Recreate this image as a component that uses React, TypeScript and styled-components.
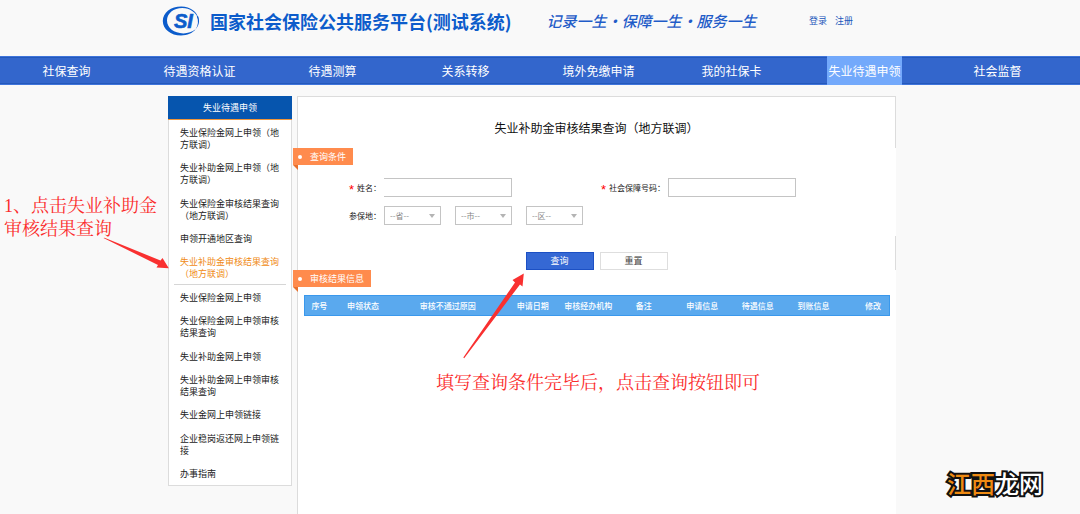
import React from 'react';
import styled, { createGlobalStyle, css } from 'styled-components';

const GlobalStyle = createGlobalStyle`
  *, *::before, *::after { box-sizing: border-box; }
  body {
    margin: 0;
    background: #f9f9f9;
    color: #222;
    font-family: "Noto Sans CJK SC", sans-serif;
    font-size: 9px;
    line-height: 12px;
  }
  button, input, select { font: inherit; margin: 0; }
  a { color: inherit; text-decoration: none; }
`;

const Page = styled.div`
  position: relative;
  display: flex;
  flex-direction: column;
  min-height: 100vh;
`;

const Header = styled.header`
  padding: 0 16px 14px 0;
`;

const HeaderInner = styled.div`
  display: flex;
  align-items: center;
  max-width: 740px;
  height: 42px;
  margin: 0 auto;
`;

const Logo = styled.svg`
  flex: none;
  width: 38px;
  height: 30px;
  margin-right: 10px;
`;

const SiteTitle = styled.h1`
  margin: 0 35px 0 0;
  color: #0c5ccb;
  font-size: 18px;
  font-weight: 700;
  line-height: 24px;
  white-space: nowrap;
`;

const Slogan = styled.p`
  margin: 0;
  color: #1f5cc8;
  font-family: KaiTi, STKaiti, "Noto Sans CJK SC", serif;
  font-size: 15px;
  font-style: italic;
  font-weight: 500;
  line-height: 20px;
  white-space: nowrap;
`;

const Account = styled.div`
  display: flex;
  gap: 8px;
  margin-left: auto;
  padding-right: 49px;
  color: #2257bb;
`;

const Nav = styled.nav`
  display: grid;
  grid-template-columns: repeat(8, 1fr);
  height: 29px;
  padding-right: 16px;
  background: linear-gradient(#3f74db 1px, #2459bb 1px 2px, #3366cc 2px 27px, #2459bb 27px 28px, #3f74db 28px);
`;

const NavLink = styled.a<{ $active?: boolean }>`
  justify-self: center;
  padding: 0 1px;
  color: #fff;
  font-size: 12px;
  line-height: 29px;
  white-space: nowrap;
  ${(p) => p.$active && css`background: #73a9fb;`}
`;

const Content = styled.div`
  flex: 1;
  display: grid;
  padding: 11px 16px 0 0;
`;

const Columns = styled.div`
  display: grid;
  grid-template-columns: 124px minmax(0, 1fr);
  gap: 5px;
  width: 100%;
  max-width: 728px;
  margin: 0 auto;
`;

const Sidebar = styled.aside`
  align-self: start;
  display: flex;
  flex-direction: column;
  min-height: 390px;
  border: 1px solid #dcdcdc;
  border-top: 0;
  background: #fff;
`;

const SidebarHead = styled.h2`
  margin: 0 -1px;
  border-bottom: 1px solid #f0953a;
  background: #0655ae;
  color: #fff;
  font-size: 9px;
  font-weight: 400;
  line-height: 23px;
  text-align: center;
`;

const Menu = styled.ul`
  flex: 1;
  display: flex;
  flex-direction: column;
  justify-content: space-between;
  margin: 0;
  padding: 7px 5px 0;
  list-style: none;
`;

const MenuItem = styled.li<{ $active?: boolean }>`
  padding: 0 5px 4px 6px;
  border-bottom: 1px solid ${(p) => (p.$active ? '#d6d6d6' : 'transparent')};
  color: ${(p) => (p.$active ? '#f08a14' : '#222')};
`;

const Panel = styled.main`
  border-top: 1px solid #dcdcdc;
  border-left: 1px solid #dcdcdc;
  background: #fff;
`;

const TitleBar = styled.div`
  padding: 19px 0 8px;
  border-right: 1px solid #dcdcdc;
`;

const PanelTitle = styled.h2`
  margin: 0;
  color: #111;
  font-size: 12px;
  font-weight: 400;
  line-height: 24px;
  text-align: center;
`;

const Tag = styled.h3`
  position: relative;
  width: fit-content;
  height: 17px;
  margin: 0 0 0 -5px;
  padding: 0 7px 0 17px;
  background: #ff8b4d;
  color: #fff;
  font-size: 9px;
  font-weight: 400;
  line-height: 17px;

  &::before {
    content: "";
    position: absolute;
    top: 7px;
    left: 5px;
    width: 4px;
    height: 4px;
    border-radius: 50%;
    background: #fff;
  }

  &::after {
    content: "";
    position: absolute;
    top: 100%;
    left: 0;
    border-top: 5px solid #e8702c;
    border-left: 5px solid transparent;
  }
`;

const Fields = styled.div`
  display: grid;
  grid-template-columns: 86px 128px 156px 128px;
  row-gap: 9px;
  align-items: center;
  padding: 13px 0 11px;
  font-size: 8px;
`;

const Label = styled.label<{ $required?: boolean }>`
  padding-right: 3px;
  text-align: right;
  ${(p) =>
    p.$required &&
    css`
      &::before {
        content: "*";
        margin-right: 3px;
        color: #f00;
        font-family: "Liberation Sans", sans-serif;
        font-size: 13px;
        line-height: 8px;
        vertical-align: -3px;
      }
    `}
`;

const TextInput = styled.input<{ $open?: boolean }>`
  width: 100%;
  height: 19px;
  padding: 0 4px;
  border: 1px solid #c4c4c4;
  ${(p) => p.$open && css`border-left: 0;`}
  border-radius: 0;
  background: #fff;
`;

const Regions = styled.div`
  grid-column: 2 / -1;
  display: flex;
  gap: 14px;
`;

const SelectBox = styled.div`
  position: relative;
  width: 57px;

  &::after {
    content: "";
    position: absolute;
    top: 8px;
    right: 6px;
    border: 3px solid transparent;
    border-top: 4px solid #b4b4b4;
    border-bottom: 0;
    pointer-events: none;
  }
`;

const Select = styled.select`
  display: block;
  width: 100%;
  height: 19px;
  padding: 0 12px 0 5px;
  border: 1px solid #c4c4c4;
  border-radius: 0;
  appearance: none;
  background: #fff;
  color: #888;
`;

const Actions = styled.div`
  display: flex;
  justify-content: center;
  gap: 6px;
  padding-top: 16px;
  border-right: 1px solid #dcdcdc;
`;

const Button = styled.button<{ $primary?: boolean }>`
  width: 68px;
  height: 18px;
  padding: 0;
  border: 1px solid ${(p) => (p.$primary ? '#1c50c4' : '#dedede')};
  background: ${(p) => (p.$primary ? '#3568d4' : '#fff')};
  color: ${(p) => (p.$primary ? '#fff' : '#444')};
  line-height: 16px;
`;

const Results = styled.div`
  padding: 8px 6px 0;
`;

const Table = styled.table`
  width: 100%;
  table-layout: fixed;
  border-collapse: collapse;
  border: 1px solid #3a98ec;
  background: #5aa9ee;
  color: #fff;
  font-size: 8px;
`;

const HeadCell = styled.th<{ $width: number; $end?: boolean }>`
  width: ${(p) => p.$width}%;
  height: 20px;
  padding: ${(p) => (p.$end ? '0 8px 0 0' : '0')};
  font-weight: 500;
  text-align: ${(p) => (p.$end ? 'right' : 'center')};
  white-space: nowrap;
`;

const Note = styled.p<{ $top: number; $left: number }>`
  position: absolute;
  top: ${(p) => p.$top}px;
  left: ${(p) => p.$left}px;
  margin: 0;
  color: #fb2c2c;
  font-family: "Liberation Serif", "Noto Serif CJK SC", "Noto Sans CJK SC", serif;
  font-size: 18px;
  font-weight: 400;
  line-height: 23px;
  white-space: nowrap;
`;

const Arrow = styled.svg<{ $top: number; $left: number }>`
  position: absolute;
  top: ${(p) => p.$top}px;
  left: ${(p) => p.$left}px;
  fill: #f93030;
  pointer-events: none;
`;

const Watermark = styled.div`
  position: absolute;
  right: 37px;
  bottom: 15px;
  color: #fff;
  font-size: 24px;
  font-weight: 500;
  line-height: 32px;
  -webkit-text-stroke: 4px #111;
  paint-order: stroke fill;
`;

const WatermarkAccent = styled.span`
  color: #ee8a12;
`;

const navItems = ['社保查询', '待遇资格认证', '待遇测算', '关系转移', '境外免缴申请', '我的社保卡', '失业待遇申领', '社会监督'];

const menuItems = [
  '失业保险金网上申领（地方联调）',
  '失业补助金网上申领（地方联调）',
  '失业保险金审核结果查询（地方联调）',
  '申领开通地区查询',
  '失业补助金审核结果查询（地方联调）',
  '失业保险金网上申领',
  '失业保险金网上申领审核结果查询',
  '失业补助金网上申领',
  '失业补助金网上申领审核结果查询',
  '失业金网上申领链接',
  '企业稳岗返还网上申领链接',
  '办事指南',
];

const regions = ['省', '市', '区'];

const columns: { name: string; width: number }[] = [
  { name: '序号', width: 5 },
  { name: '申领状态', width: 10 },
  { name: '审核不通过原因', width: 19 },
  { name: '申请日期', width: 10 },
  { name: '审核经办机构', width: 9 },
  { name: '备注', width: 10 },
  { name: '申请信息', width: 10 },
  { name: '待遇信息', width: 9 },
  { name: '到账信息', width: 10 },
  { name: '修改', width: 8 },
];

export default function App() {
  return (
    <Page lang="zh-CN">
      <GlobalStyle />
      <Header>
        <HeaderInner>
          <Logo viewBox="0 0 38 30" role="img" aria-label="SI">
            <path
              fill="#0c5ccb"
              fillRule="evenodd"
              d="M36.6 13.5C35.6 6 28.5 .5 19.3 .5 8.900 .5 .8 6.600 .8 15c0 8.300 8 14.500 18.200 14.500 6.500 0 11.500-2.300 14.600-6.200-3.400 2.800-7.600 4.100-12.200 4.100C12 27.400 5 22 5 14.600 5 7.400 11.600 2 20.200 2c7.800 0 14.300 4.600 16.400 11.500z"
            />
            <path fill="#0c5ccb" d="M34.800 10.500c2 4.300 1.400 8.700-1.200 12.800 3.600-3.800 4.400-8.800 2.400-13.300z" />
            <text x="12" y="21.500" fill="#0c5ccb" stroke="#0c5ccb" strokeWidth=".6" fontFamily="Liberation Sans" fontSize="20" fontStyle="italic" fontWeight="700">
              SI
            </text>
          </Logo>
          <SiteTitle>国家社会保险公共服务平台(测试系统)</SiteTitle>
          <Slogan>记录一生・保障一生・服务一生</Slogan>
          <Account>
            <a href="#login">登录</a>
            <a href="#register">注册</a>
          </Account>
        </HeaderInner>
      </Header>

      <Nav>
        {navItems.map((item) => (
          <NavLink key={item} href="#nav" $active={item === '失业待遇申领'}>
            {item}
          </NavLink>
        ))}
      </Nav>

      <Content>
        <Columns>
          <Sidebar>
            <SidebarHead>失业待遇申领</SidebarHead>
            <Menu>
              {menuItems.map((item, i) => (
                <MenuItem key={item} $active={i === 4}>
                  <a href="#menu">{item}</a>
                </MenuItem>
              ))}
            </Menu>
          </Sidebar>

          <Panel>
            <TitleBar>
              <PanelTitle>失业补助金审核结果查询（地方联调）</PanelTitle>
            </TitleBar>
            <form onSubmit={(e) => e.preventDefault()}>
              <Tag>查询条件</Tag>
              <Fields>
                <Label htmlFor="name" $required>姓名：</Label>
                <TextInput id="name" type="text" $open />
                <Label htmlFor="number" $required>社会保障号码：</Label>
                <TextInput id="number" type="text" />
                <Label htmlFor="region-0">参保地：</Label>
                <Regions>
                  {regions.map((r, i) => (
                    <SelectBox key={r}>
                      <Select id={`region-${i}`} aria-label={r}>
                        <option>{`--${r}--`}</option>
                      </Select>
                    </SelectBox>
                  ))}
                </Regions>
              </Fields>
              <Actions>
                <Button type="submit" $primary>查询</Button>
                <Button type="reset">重置</Button>
              </Actions>
            </form>
            <Tag>审核结果信息</Tag>
            <Results>
              <Table>
                <thead>
                  <tr>
                    {columns.map((c, i) => (
                      <HeadCell key={c.name} scope="col" $width={c.width} $end={i === columns.length - 1}>
                        {c.name}
                      </HeadCell>
                    ))}
                  </tr>
                </thead>
              </Table>
            </Results>
          </Panel>
        </Columns>
      </Content>

      <Note $top={195} $left={4}>
        1、点击失业补助金
        <br />
        审核结果查询
      </Note>
      <Arrow $top={237} $left={103} width="67" height="33" viewBox="0 0 67 33" aria-hidden="true">
        <path d="M.5 1 1.500 .8 57.500 23.500 59.500 21 65.800 31.200 53.500 30.500 55 28z" />
      </Arrow>
      <Note $top={372} $left={436}>填写查询条件完毕后，点击查询按钮即可</Note>
      <Arrow $top={273} $left={463} width="62" height="86" viewBox="0 0 62 86" aria-hidden="true">
        <path d="M.3 84.500 52 9.500 49.500 7 60.800 .5 59.500 13.500 57 11.500 1.200 85.200z" />
      </Arrow>
      <Watermark>
        <WatermarkAccent>江西</WatermarkAccent>龙网
      </Watermark>
    </Page>
  );
}
